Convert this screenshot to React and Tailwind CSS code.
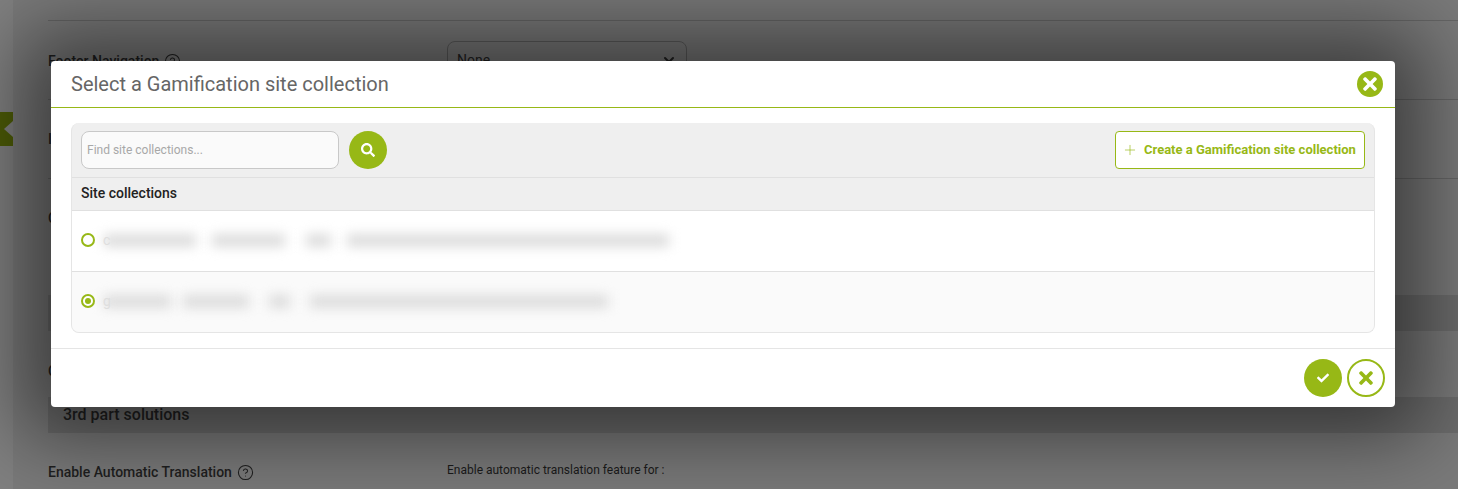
import React from 'react';
import { FaCheck, FaSearch, FaTimes } from 'react-icons/fa';
import { Plus, ChevronDown, CircleHelp } from 'lucide-react';

// Label with the little help icon, used on the settings page behind the dialog
const HelpLabel = ({ children }) => (
  <div className="flex items-center gap-[5px] text-sm font-medium text-[#1f1f1f]">
    <span>{children}</span>
    <CircleHelp className="h-[17px] w-[17px]" strokeWidth={1.5} />
  </div>
);

// Settings page dimmed behind the dialog
const BackgroundPage = () => (
  <div className="flex h-[489px] w-full overflow-hidden bg-[#7a7a7a]">
    <div className="w-[13px] shrink-0 bg-[#808080] pt-[112px]">
      <svg width="13" height="34" viewBox="0 0 13 34" className="block">
        <path d="M0 0H13V9L4 17L13 25V34H0Z" fill="#4d5c07" />
      </svg>
    </div>
    <div className="flex-1 pl-[35px]">
      <div className="h-[21px] border-b border-[#666]" />
      <div className="flex h-[79px] border-b border-[#666] pt-5">
        <div className="w-[399px] pt-[10px]">
          <HelpLabel>Footer Navigation</HelpLabel>
        </div>
        <div className="flex h-[37px] w-[240px] items-center justify-between rounded-lg border border-[#5c5c5c] px-[9px] text-sm text-[#222]">
          <span>None</span>
          <ChevronDown className="h-4 w-4" strokeWidth={3} />
        </div>
      </div>
      <div className="h-[79px] border-b border-[#666] pt-[29px] text-sm font-medium text-[#1f1f1f]">I</div>
      <div className="h-[116px] pt-[29px] text-sm font-medium text-[#1f1f1f]">C</div>
      <div className="h-[36px] bg-[#6c6c6c]" />
      <div className="h-[66px] pt-[30px] text-sm font-medium text-[#1f1f1f]">C</div>
      <div className="flex h-[36px] items-center bg-[#6c6c6c] px-[15px] text-base font-medium text-[#1f1f1f]">
        3rd part solutions
      </div>
      <div className="mt-[29px] flex">
        <div className="w-[399px]">
          <HelpLabel>Enable Automatic Translation</HelpLabel>
        </div>
        <div className="text-xs text-[#1a1a1a]">Enable automatic translation feature for :</div>
      </div>
    </div>
  </div>
);

// Site collection row with a redacted (blurred) name
const SiteRow = ({ selected, lead, segments, alt }) => (
  <div className={`flex h-[60px] items-center pb-[2px] pl-[9px] ${alt ? 'bg-[#fafafa]' : 'bg-white'}`}>
    <span className="flex h-[14px] w-[14px] items-center justify-center rounded-full border-2 border-[#97b816] bg-white">
      {selected && <span className="h-[6px] w-[6px] rounded-full bg-[#97b816]" />}
    </span>
    <span className="ml-[8px] w-0 text-sm text-[#e0e0e0]">{lead}</span>
    <div className="ml-[1px] flex items-center">
      {segments.map(([gap, width], index) => (
        <span
          key={index}
          className="h-[13px] bg-[#dcdcdc] blur-[6px]"
          style={{ marginLeft: gap, width }}
        />
      ))}
    </div>
  </div>
);

const GamificationModal = () => (
  <div className="absolute left-[51px] top-[61px] flex h-[346px] w-[1344px] flex-col rounded-[4px] bg-white shadow-[0_0_80px_30px_rgba(0,0,0,0.5)]">
    <div className="flex h-[47px] shrink-0 items-center justify-between border-b border-[#97b816] pl-5 pr-3">
      <h2 className="text-[20px] font-normal text-[#666]">Select a Gamification site collection</h2>
      <button className="flex h-[26px] w-[26px] items-center justify-center rounded-full bg-[#97b816] text-white">
        <FaTimes className="h-[20px] w-[20px]" />
      </button>
    </div>

    <div className="mx-5 mt-[15px] overflow-hidden rounded-lg border border-t-0 border-[#e5e5e5] bg-[#efefef]">
      <div className="flex h-[55px] items-center justify-between border-b border-[#e0e0e0] px-[9px]">
        <div className="flex items-center gap-[10px]">
          <div className="flex h-[38px] w-[258px] items-center rounded-lg border border-[#c8c8c8] bg-[#fafafa] px-[5px] text-xs text-[#a8a8a8]">
            Find site collections...
          </div>
          <button className="flex h-[38px] w-[38px] items-center justify-center rounded-full bg-[#97b816] text-white">
            <FaSearch className="h-[14px] w-[14px]" />
          </button>
        </div>
        <button className="flex h-[38px] w-[250px] items-center gap-[6px] rounded-[4px] border border-[#97b816] bg-white pl-[6px] text-[13px] font-bold text-[#97b816]">
          <Plus className="h-[16px] w-[16px]" strokeWidth={1} />
          Create a Gamification site collection
        </button>
      </div>
      <div className="flex h-[33px] items-center border-b border-[#e0e0e0] pb-[2px] pl-[9px] text-sm font-medium text-[#222]">
        Site collections
      </div>
      <SiteRow lead="c" segments={[[0, 92], [16, 73], [21, 25], [16, 322]]} />
      <div className="h-px bg-[#e0e0e0]" />
      <SiteRow selected alt lead="g" segments={[[0, 67], [12, 66], [20, 21], [20, 298]]} />
    </div>

    <div className="mt-[15px] flex flex-1 items-center justify-end gap-[5px] border-t border-[#e5e5e5] pr-[10px]">
      <button className="flex h-[38px] w-[38px] items-center justify-center rounded-full bg-[#97b816] text-white">
        <FaCheck className="h-[12px] w-[12px]" />
      </button>
      <button className="flex h-[38px] w-[38px] items-center justify-center rounded-full border-2 border-[#97b816] bg-white text-[#97b816]">
        <FaTimes className="h-[20px] w-[20px]" />
      </button>
    </div>
  </div>
);

export default function App() {
  return (
    <div className="relative h-[489px] w-[1458px] overflow-hidden font-['Roboto',sans-serif]">
      <BackgroundPage />
      <GamificationModal />
    </div>
  );
}
